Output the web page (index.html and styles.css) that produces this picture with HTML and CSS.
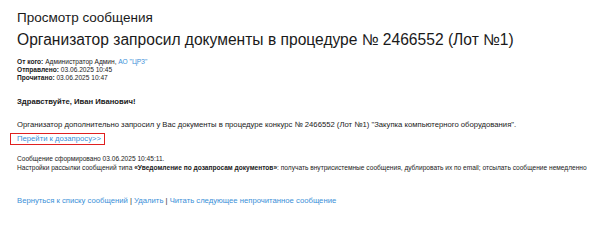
FILE: index.html
```html
<!DOCTYPE html>
<html lang="ru">
<head>
<meta charset="utf-8">
<title>Просмотр сообщения</title>
<link rel="stylesheet" href="styles.css">
</head>
<body>
<div class="page">
  <h1 class="page-title">Просмотр сообщения</h1>
  <h2 class="msg-title">Организатор запросил документы в процедуре № 2466552 (Лот №1)</h2>
  <div class="meta">
    <div><b>От кого:</b> Администратор Админ, <a class="link" href="#">АО "ЦРЗ"</a></div>
    <div><b>Отправлено:</b> 03.06.2025 10:45</div>
    <div><b>Прочитано:</b> 03.06.2025 10:47</div>
  </div>
  <div class="body">
    <p class="greeting">Здравствуйте, Иван Иванович!</p>
    <p class="text">Организатор дополнительно запросил у Вас документы в процедуре конкурс № 2466552 (Лот №1) "Закупка компьютерного оборудования".</p>
    <p class="goto"><a class="link boxed" href="#">Перейти к дозапросу&gt;&gt;</a></p>
  </div>
  <div class="footer-note">
    <div>Сообщение сформировано 03.06.2025 10:45:11.</div>
    <div>Настройки рассылки сообщений типа <b>«Уведомление по дозапросам документов»</b>: получать внутрисистемные сообщения, дублировать их по email; отсылать сообщение немедленно</div>
  </div>
  <div class="actions">
    <a class="link" href="#">Вернуться к списку сообщений</a> <span class="sep">|</span> <a class="link" href="#">Удалить</a> <span class="sep">|</span> <a class="link" href="#">Читать следующее непрочитанное сообщение</a>
  </div>
</div>
</body>
</html>
```
FILE: styles.css
```css
html, body {
  margin: 0;
  padding: 0;
  background: #ffffff;
}
body {
  font-family: "Liberation Sans", Arial, sans-serif;
  color: #1a1a1a;
}
.page {
  padding: 9px 0 0 17px;
  width: 583px;
  overflow: hidden;
}
.page-title {
  margin: 0;
  font-size: 13.5px;
  font-weight: normal;
  line-height: 18px;
}
.msg-title {
  margin: 2px 0 0 0;
  font-size: 15.6px;
  font-weight: normal;
  line-height: 22px;
}
.meta {
  margin-top: 6.5px;
  font-size: 6.6px;
  line-height: 8px;
}
.link {
  color: #3a8fd8;
  text-decoration: none;
}
.body {
  margin-top: 14.5px;
}
.body p {
  margin: 0;
  font-size: 7.7px;
  line-height: 11px;
}
.greeting {
  font-weight: bold;
}
.body .text {
  margin-top: 11.5px;
}
.body .goto {
  margin-top: 3.5px;
  line-height: 11.6px;
}
.boxed {
  display: inline-block;
  margin-left: -7px;
  padding: 0 3px 0 6px;
  border: 1px solid #e02020;
  line-height: 9.6px;
  vertical-align: top;
}
.footer-note {
  margin-top: 10.8px;
  font-size: 6.6px;
  line-height: 8.4px;
  white-space: nowrap;
}
.actions {
  margin-top: 23.6px;
  font-size: 7.7px;
  line-height: 10px;
}
.sep {
  color: #333;
}
```
